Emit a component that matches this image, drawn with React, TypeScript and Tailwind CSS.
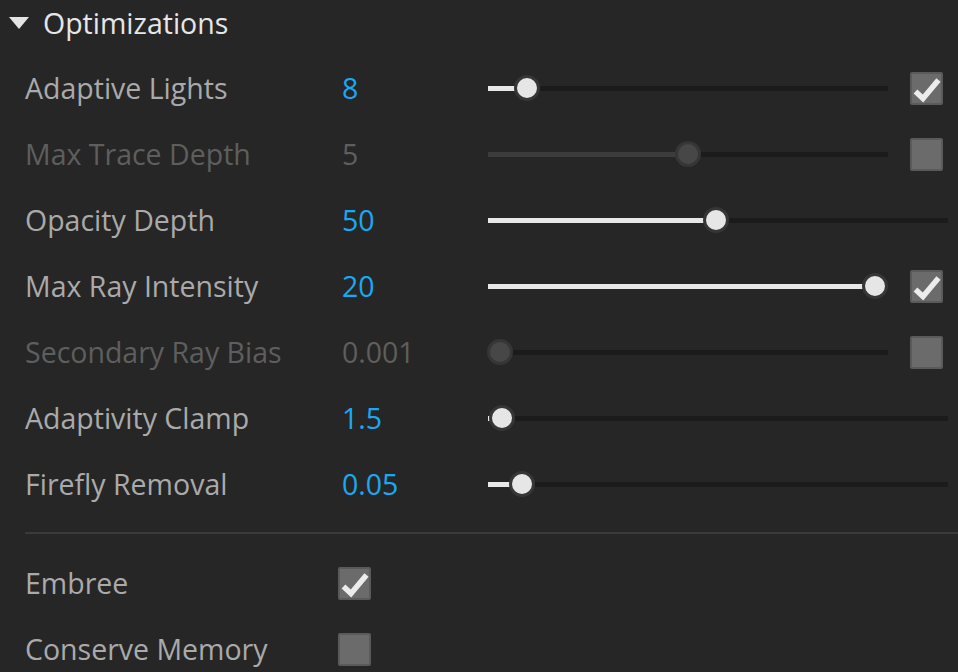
import React from "react";

type Row = {
  label: string;
  value: string;
  pos: number;
  enabled: boolean;
  check?: boolean;
};

const rows: Row[] = [
  { label: "Adaptive Lights", value: "8", pos: 39, enabled: true, check: true },
  { label: "Max Trace Depth", value: "5", pos: 200, enabled: false, check: false },
  { label: "Opacity Depth", value: "50", pos: 228, enabled: true },
  { label: "Max Ray Intensity", value: "20", pos: 387, enabled: true, check: true },
  { label: "Secondary Ray Bias", value: "0.001", pos: 12, enabled: false, check: false },
  { label: "Adaptivity Clamp", value: "1.5", pos: 14, enabled: true },
  { label: "Firefly Removal", value: "0.05", pos: 34, enabled: true },
];

function Checkbox({ checked }: { checked: boolean }) {
  return (
    <div className="flex h-[33px] w-[33px] shrink-0 items-center justify-center rounded-[2px] border-2 border-[#5a5a5a] bg-[#6b6b6b]">
      {checked && (
        <svg width="33" height="33" viewBox="0 0 33 33" className="-m-[2px]">
          <path d="M5.5 19.5 L13 26.5 L28.5 8" fill="none" stroke="#ececec" strokeWidth="5.5" strokeLinejoin="miter" />
        </svg>
      )}
    </div>
  );
}

function Slider({ pos, enabled, wide }: { pos: number; enabled: boolean; wide: boolean }) {
  return (
    <div className={`relative flex h-[26px] items-center ${wide ? "w-[460px]" : "w-[400px]"}`}>
      <div className="h-[5px] w-full bg-[#1b1b1b]">
        <div className={`h-full ${enabled ? "bg-[#e8e8e8]" : "bg-[#3c3c3c]"}`} style={{ width: pos }} />
      </div>
      <div
        className={`absolute top-[0px] h-[26px] w-[26px] rounded-full border-[3px] border-[#363636] ${
          enabled ? "bg-[#e6e6e6]" : "bg-[#474747]"
        }`}
        style={{ left: pos - 13 }}
      />
    </div>
  );
}

export default function App() {
  return (
    <div
      className="h-[672px] w-[958px] overflow-hidden bg-[#262626] text-[#aaaaaa]"
      style={{ fontFamily: '"Open Sans", "Noto Sans", sans-serif' }}
    >
      <div className="flex h-[46px] items-center pl-[9px]">
        <svg width="20" height="12" viewBox="0 0 20 12" className="mr-[14px]">
          <polygon points="0,0 20,0 10,12" fill="#e4e4e4" />
        </svg>
        <span className="text-[28.5px] text-[#e6e6e6]">Optimizations</span>
      </div>
      <div className="pt-[9px]">
        {rows.map((r) => (
          <div key={r.label} className="flex h-[66px] items-center pl-[25px]">
            <span
              className={`w-[317px] shrink-0 text-[28.5px] ${r.enabled ? "text-[#aaaaaa]" : "text-[#5e5e5e]"}`}
            >
              {r.label}
            </span>
            <span
              className={`w-[146px] shrink-0 text-[28.5px] ${r.enabled ? "text-[#1ba8f2]" : "text-[#5e5e5e]"}`}
            >
              {r.value}
            </span>
            <Slider pos={r.pos} enabled={r.enabled} wide={r.check === undefined} />
            {r.check !== undefined && (
              <div className="ml-[22px]">
                <Checkbox checked={r.check} />
              </div>
            )}
          </div>
        ))}
      </div>
      <div className="ml-[25px] mt-[15px] h-[2px] bg-[#3a3a3a]" />
      <div className="pt-[16px]">
        {[
          { label: "Embree", check: true },
          { label: "Conserve Memory", check: false },
        ].map((r) => (
          <div key={r.label} className="flex h-[66px] items-center pl-[25px]">
            <span className="w-[313px] shrink-0 text-[28.5px] text-[#aaaaaa]">{r.label}</span>
            <Checkbox checked={r.check} />
          </div>
        ))}
      </div>
    </div>
  );
}
